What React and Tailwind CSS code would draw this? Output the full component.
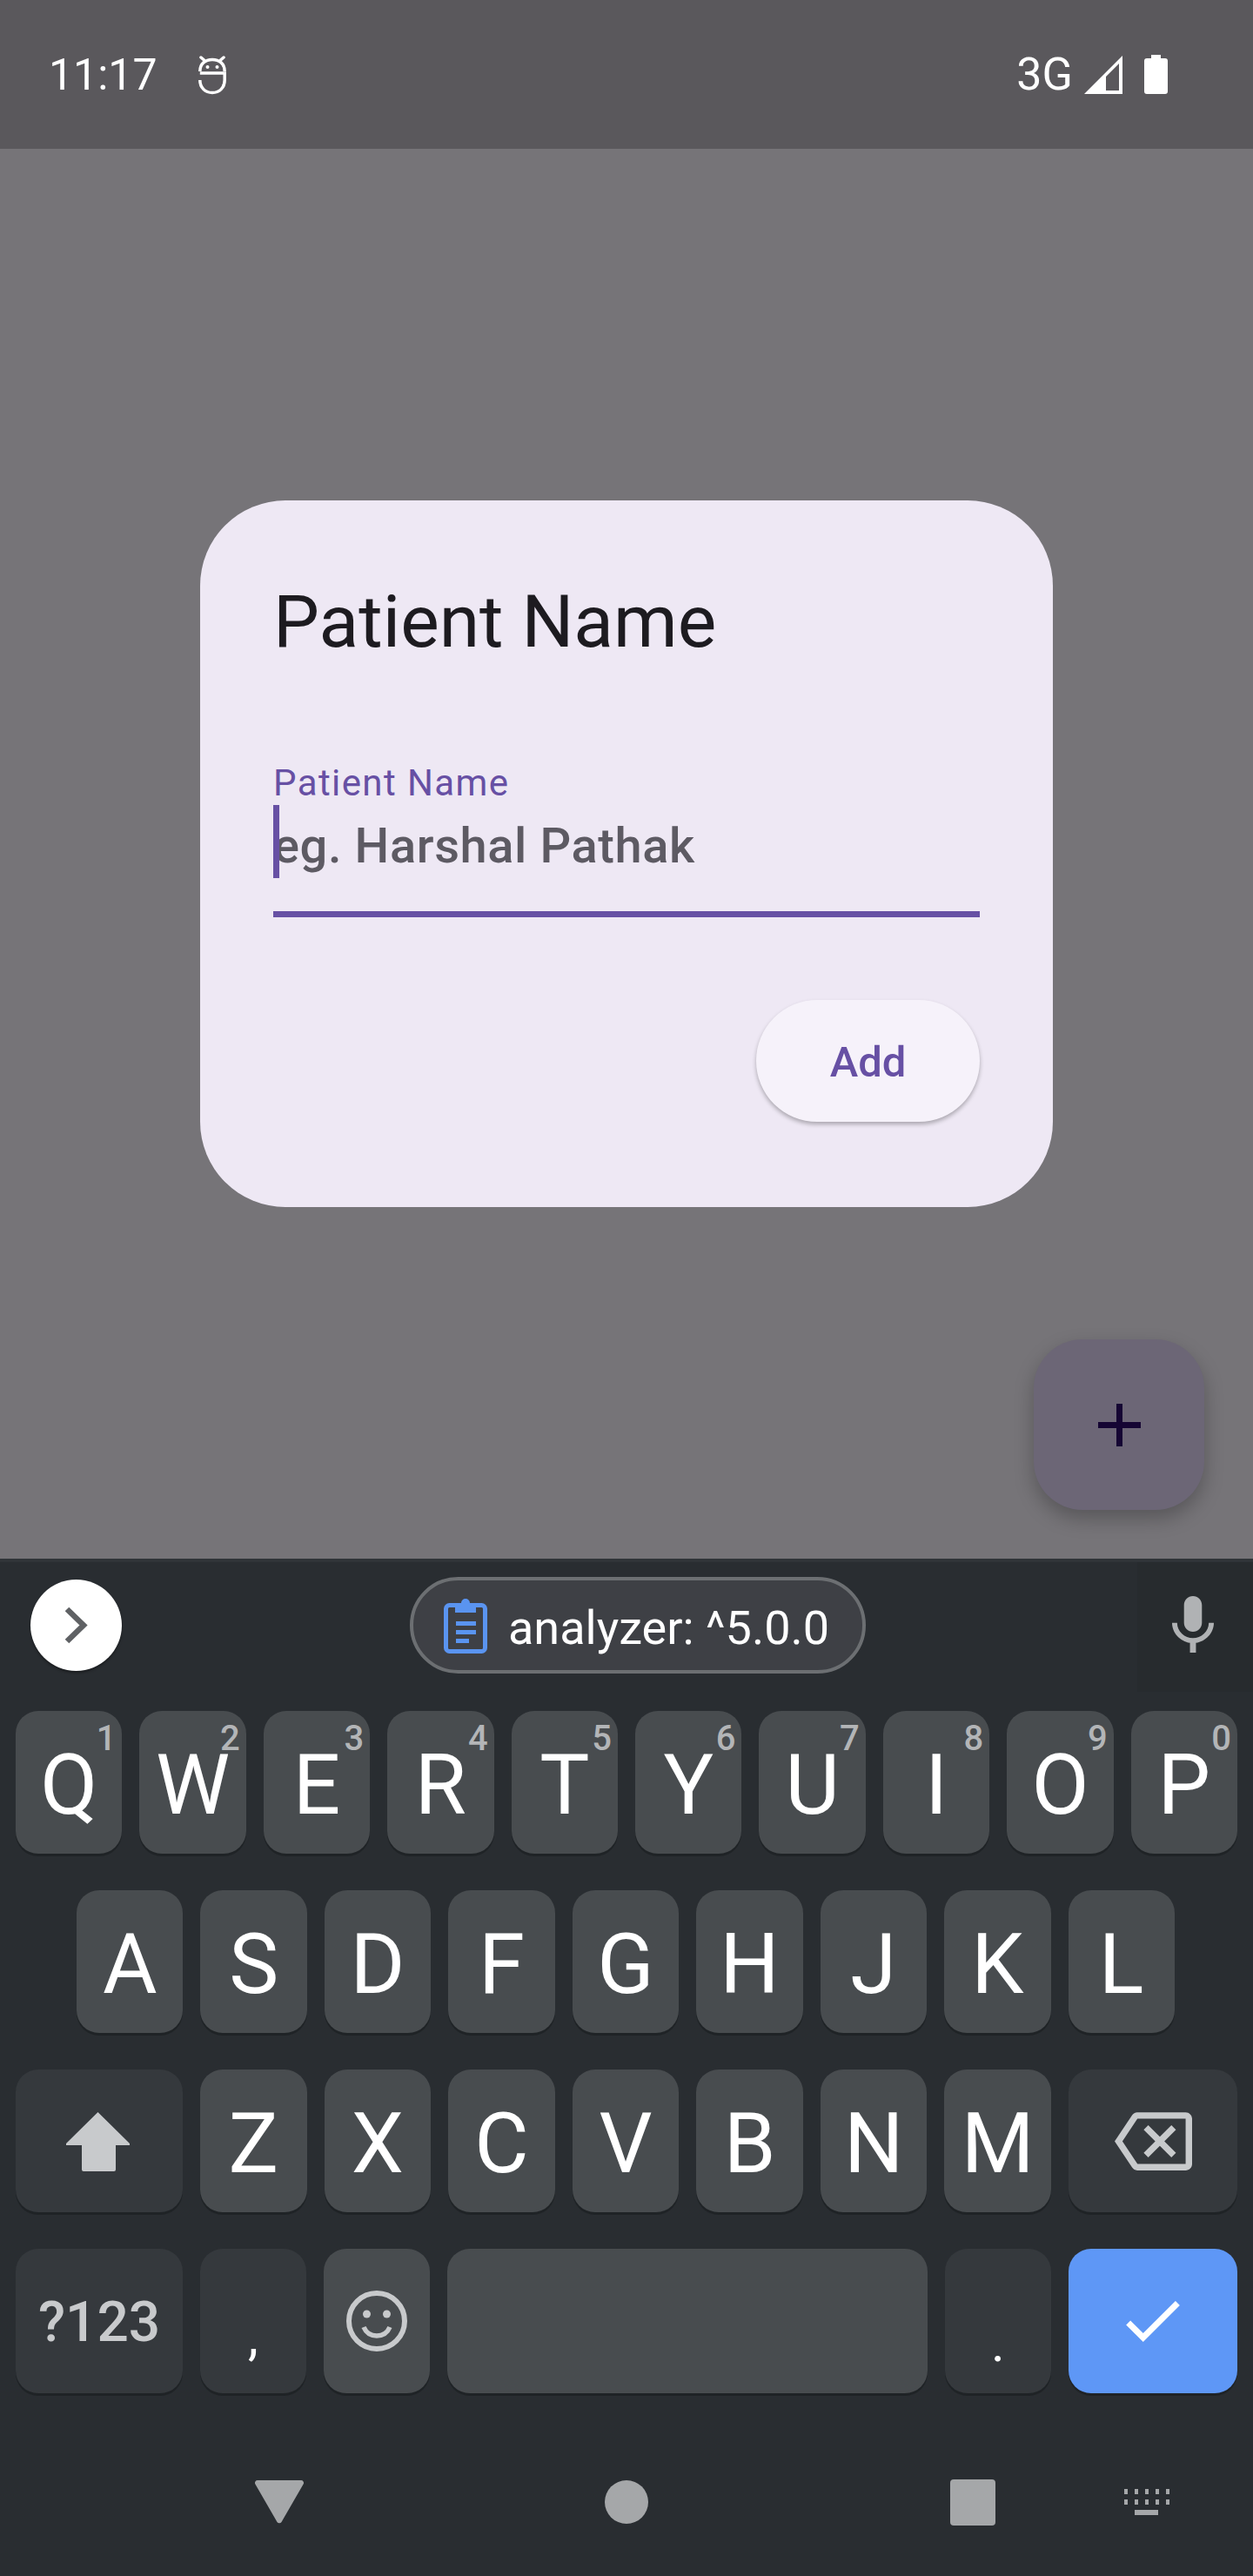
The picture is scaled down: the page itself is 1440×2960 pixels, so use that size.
import React from "react";

const Key = ({ k, d }) => (
  <div className="relative flex flex-1 items-center justify-center rounded-[26px] bg-[#484c4f] pt-[5px] text-[96px] leading-none text-white shadow-[0_3px_0_#1f2326]">
    {k}
    {d && <span className="absolute right-[7px] top-[7px] text-[40px] font-medium leading-[50px] text-[#b3b5b7]">{d}</span>}
  </div>
);

const DarkKey = ({ children, className }) => (
  <div className={"relative flex items-center justify-center rounded-[26px] bg-[#35393d] shadow-[0_3px_0_#1f2326] " + className}>{children}</div>
);

const row1 = [["Q","1"],["W","2"],["E","3"],["R","4"],["T","5"],["Y","6"],["U","7"],["I","8"],["O","9"],["P","0"]];
const row2 = ["A","S","D","F","G","H","J","K","L"];
const row3 = ["Z","X","C","V","B","N","M"];

export default function App() {
  return (
    <div className="flex h-[2960px] w-[1440px] flex-col overflow-hidden bg-[#767478] font-['Roboto',sans-serif]">
      {/* status bar */}
      <div className="flex h-[171px] shrink-0 items-center bg-[#5a585c] pl-[56px] pr-[98px] text-white">
        <span className="text-[50px] leading-none">11:17</span>
        <svg className="ml-[47px]" width="32" height="46" viewBox="0 0 32 46" fill="none" stroke="white" strokeWidth="3.5">
          <path d="M3 3l3.5 3M29 3l-3.5 3" strokeLinecap="round" />
          <path d="M1.8 19C1.8 10 8 5.5 16 5.5S30.2 10 30.2 19" />
          <path d="M1.8 21H30.2V29C30.2 38 24 43.5 16 43.5S1.8 38 1.8 29" />
          <circle cx="10.5" cy="14" r="2" fill="white" stroke="none" />
          <circle cx="21.5" cy="14" r="2" fill="white" stroke="none" />
        </svg>
        <span className="ml-auto text-[52px] leading-none">3G</span>
        <svg className="ml-[13px]" width="44" height="44" viewBox="0 0 44 44">
          <path fillRule="evenodd" d="M44 0V44H0ZM40 9 L25 24V40H40Z" fill="white" />
        </svg>
        <svg className="ml-[25px]" width="27" height="45" viewBox="0 0 27 45">
          <path d="M8 0h11v4h5a3 3 0 0 1 3 3v35a3 3 0 0 1-3 3H3a3 3 0 0 1-3-3V7a3 3 0 0 1 3-3h5Z" fill="white" />
        </svg>
      </div>

      {/* app area */}
      <div className="relative flex flex-1 items-center justify-center">
        <div className="flex h-[812px] w-[980px] flex-col rounded-[98px] bg-[#eee8f4] px-[84px] pt-[84px]">
          <div className="text-[84px] leading-[112px] text-[#1d1b20]">Patient Name</div>
          <div className="mt-[104px] text-[42px] leading-[50px] tracking-[1.4px] text-[#6750a4]">Patient Name</div>
          <div className="relative h-[84px] pt-[5px] text-[56px] font-medium leading-[84px] tracking-[0.6px] text-[#5d5a63]">
            <span className="absolute left-0 top-0 h-[84px] w-[7px] bg-[#6750a4]" />
            eg. Harshal Pathak
          </div>
          <div className="mt-[38px] h-[7px] bg-[#6750a4]" />
          <div className="mt-[95px] flex justify-end">
            <div className="flex h-[140px] w-[257px] items-center justify-center rounded-full bg-[#f6f2fa] pt-[3px] text-[49px] font-medium text-[#6750a4] shadow-[0_3px_5px_rgba(0,0,0,0.28)]">Add</div>
          </div>
        </div>
        <div className="absolute bottom-[56px] right-[56px] flex h-[196px] w-[196px] items-center justify-center rounded-[56px] bg-[#6c6676] shadow-[0_10px_22px_rgba(0,0,0,0.25)]">
          <svg width="49" height="49" viewBox="0 0 49 49" fill="#150533">
            <path d="M21 0h7v21h21v7H28v21h-7V28H0v-7h21Z" />
          </svg>
        </div>
      </div>

      {/* keyboard */}
      <div className="flex h-[1169px] shrink-0 flex-col border-t-[4px] border-[#303438] bg-[#292d31]">
        <div className="flex h-[149px] shrink-0 items-start">
          <div className="ml-[35px] mt-[20px] flex h-[105px] w-[105px] items-center justify-center rounded-full bg-white shadow-[0_2px_3px_rgba(0,0,0,0.4)]">
            <svg width="27" height="43" viewBox="0 0 27 43" fill="none" stroke="#5f6164" strokeWidth="6.5"><path d="M3 3l19 18.5L3 40" /></svg>
          </div>
          <div className="ml-[331px] mt-[17px] flex h-[111px] w-[524px] items-center rounded-full border-[4px] border-[#6c6f72] bg-[#3e4045] pl-[35px] text-white">
            <svg width="50" height="65" viewBox="0 0 50 65" fill="none">
              <rect x="2.5" y="9.5" width="45" height="53" rx="4" stroke="#5a94f0" strokeWidth="5" />
              <path d="M13 7h7a5 5 0 0 1 10 0h7v11H13Z" fill="#5a94f0" />
              <path d="M14 28h23v5H14ZM14 38h23v5H14ZM14 48h15v5H14Z" fill="#5a94f0" />
            </svg>
            <span className="ml-[24px] pt-[7px] text-[54px] leading-none">analyzer: ^5.0.0</span>
          </div>
          <div className="ml-auto flex h-[149px] w-[133px] items-center justify-center bg-[#272b2e] pb-[6px] pr-[6px]">
            <svg width="48" height="67" viewBox="5 2 14 19" fill="#b0b2b4">
              <path d="M12 14c1.66 0 3-1.34 3-3V5c0-1.66-1.34-3-3-3S9 3.34 9 5v6c0 1.66 1.34 3 3 3zm5.3-3c0 3-2.54 5.1-5.3 5.1S6.7 14 6.7 11H5c0 3.41 2.72 6.23 6 6.72V21h2v-3.28c3.28-.48 6-3.3 6-6.72h-1.7z" />
            </svg>
          </div>
        </div>

        <div className="mt-[22px] flex h-[164px] gap-[20px] px-[18px]">
          {row1.map(([k, d]) => <Key key={k} k={k} d={d} />)}
        </div>
        <div className="mt-[42px] flex h-[164px] gap-[20px] pl-[88px] pr-[90px]">
          {row2.map((k) => <Key key={k} k={k} />)}
        </div>
        <div className="mt-[42px] flex h-[164px] gap-[20px] px-[18px]">
          <DarkKey className="w-[192px] shrink-0 pr-[3px]">
            <svg width="75" height="69" viewBox="0 0 75 69" fill="#c8cacc"><path d="M37.5 1L74 37v2H58v28a2 2 0 0 1-2 2H21a2 2 0 0 1-2-2V39H1v-2Z" /></svg>
          </DarkKey>
          {row3.map((k) => <Key key={k} k={k} />)}
          <DarkKey className="w-[194px] shrink-0">
            <svg width="89" height="69" viewBox="0 3 24 18" fill="#c8cacc">
              <path d="M22 3H7c-.69 0-1.23.35-1.59.88L0 12l5.41 8.11c.36.53.9.89 1.59.89h15c1.1 0 2-.9 2-2V5c0-1.1-.9-2-2-2zm0 16H7.07L2.4 12l4.66-7H22v14zm-11.59-2L14 13.41 17.59 17 19 15.59 15.41 12 19 8.41 17.59 7 14 10.59 10.41 7 9 8.41 12.59 12 9 15.59z" />
            </svg>
          </DarkKey>
        </div>
        <div className="mt-[42px] flex h-[166px] gap-[20px] px-[18px]">
          <DarkKey className="w-[192px] shrink-0 pt-[3px] text-[64px] font-medium text-[#c8cacc]">?123</DarkKey>
          <DarkKey className="w-[122px] shrink-0 pb-[24px] text-[60px] text-white">
            <span className="mt-[60px] leading-none">,</span>
          </DarkKey>
          <div className="flex w-[122px] shrink-0 items-center justify-center rounded-[26px] bg-[#484c4f] shadow-[0_3px_0_#1f2326]">
            <svg width="70" height="70" viewBox="0 0 70 70" fill="none">
              <circle cx="35" cy="35" r="32" stroke="#c8cacc" strokeWidth="6" />
              <circle cx="23.5" cy="27" r="4.5" fill="#c8cacc" />
              <circle cx="46.5" cy="27" r="4.5" fill="#c8cacc" />
              <path d="M20 42c3 7 9 10 15 10s12-3 15-10" stroke="#c8cacc" strokeWidth="5.5" />
            </svg>
          </div>
          <div className="flex-1 rounded-[26px] bg-[#484c4f] shadow-[0_3px_0_#1f2326]" />
          <DarkKey className="w-[122px] shrink-0 text-[60px] text-white">
            <span className="mt-[52px] leading-none">.</span>
          </DarkKey>
          <div className="flex w-[194px] shrink-0 items-center justify-center rounded-[26px] bg-[#5e97f6] shadow-[0_3px_0_#1f2326]">
            <svg width="62" height="47" viewBox="3.4 5.6 17.6 13.4" fill="white"><path d="M9 16.17L4.83 12l-1.42 1.41L9 19 21 7l-1.41-1.41z" /></svg>
          </div>
        </div>

        <div className="mt-[75px] flex h-[100px] items-center pl-[293px]">
          <svg width="56" height="50" viewBox="0 0 56 50" fill="#a5a7a9"><path d="M3 0h50a3 3 0 0 1 2.6 4.5L30.5 48a3 3 0 0 1-5 0L.4 4.5A3 3 0 0 1 3 0Z" /></svg>
          <div className="ml-[346px] h-[50px] w-[50px] rounded-full bg-[#a5a7a9]" />
          <div className="ml-[347px] h-[53px] w-[52px] rounded-[4px] bg-[#a5a7a9]" />
          <svg className="ml-[148px]" width="52" height="30" viewBox="0 0 52 30" fill="#a5a7a9">
            <path d="M0 0h4v6H0ZM12 0h4v6h-4ZM24 0h4v6h-4ZM36 0h4v6h-4ZM48 0h4v6h-4ZM0 12h4v6H0ZM12 12h4v6h-4ZM24 12h4v6h-4ZM36 12h4v6h-4ZM48 12h4v6h-4ZM12 24h27v6H12Z" />
          </svg>
        </div>
      </div>
    </div>
  );
}
